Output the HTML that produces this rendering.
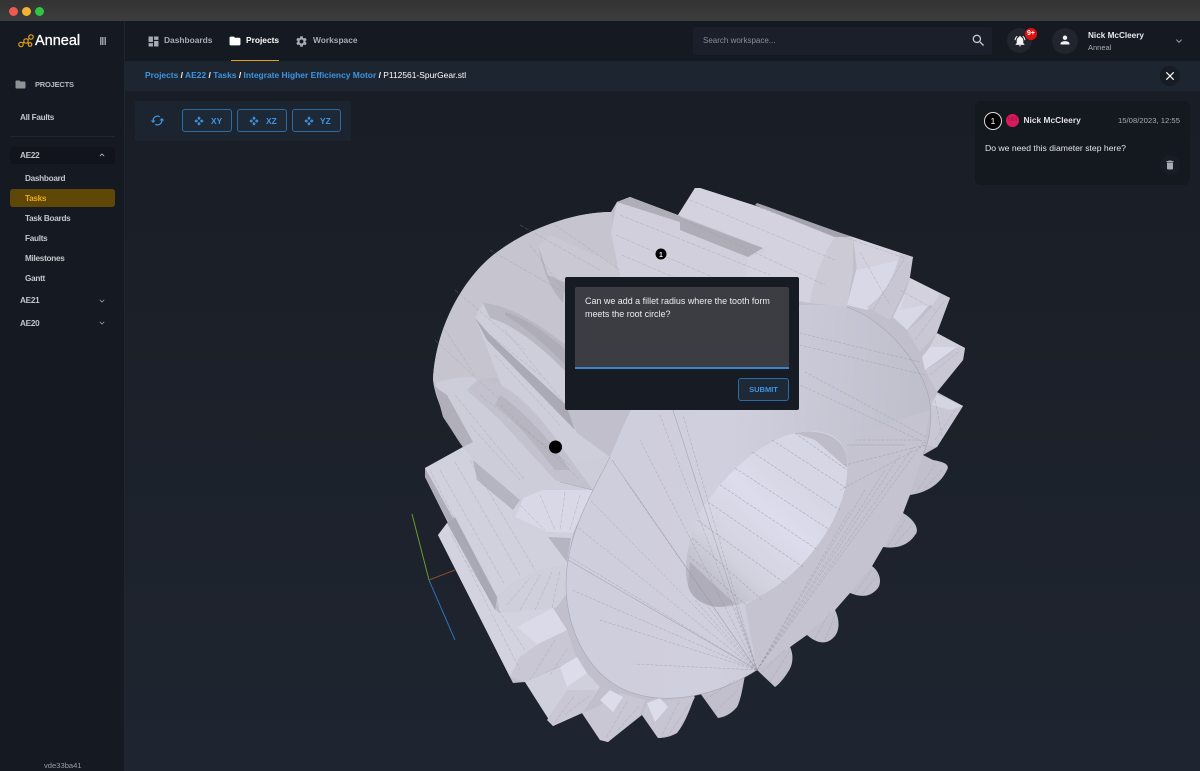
<!DOCTYPE html>
<html lang="en"><head><meta charset="utf-8"><title>Anneal</title>
<style>
*{box-sizing:border-box}
html,body{margin:0;padding:0;background:#1d222c}
body{width:1200px;height:771px;position:relative;overflow:hidden;font-family:"Liberation Sans",sans-serif;font-size:8.4px;color:#d8dadf}
.a{position:absolute;white-space:nowrap}
.b{font-weight:bold}
.s{font-size:8.200px;letter-spacing:-.28px;font-weight:bold;color:#c4c6ca;line-height:11px}
svg.i{position:absolute;fill:currentColor}
.blue{color:#3f94e0}
.btn{position:absolute;top:109px;height:23px;border:1px solid #2f6ba3;border-radius:3px;background:#1e2937}
</style></head><body>
<div class="a" style="left:0;top:0;width:1200px;height:21px;background:linear-gradient(#333333,#3d3d3d)"></div>
<div class="a" style="left:9px;top:7px;width:9px;height:9px;border-radius:50%;background:#ee5a52"></div>
<div class="a" style="left:22px;top:7px;width:9px;height:9px;border-radius:50%;background:#f4b42f"></div>
<div class="a" style="left:35px;top:7px;width:9px;height:9px;border-radius:50%;background:#30c544"></div>

<div class="a" style="left:0;top:21px;width:1200px;height:40px;background:#151922"></div>
<div class="a" style="left:0;top:61px;width:124px;height:710px;background:#151922"></div>
<div class="a" style="left:124px;top:21px;width:1px;height:750px;background:#1f2630"></div>
<div class="a" style="left:125px;top:61px;width:1075px;height:30px;background:#1d2530"></div>
<div class="a" style="left:125px;top:91px;width:1075px;height:680px;background:linear-gradient(#191d25,#1f2530)"></div>

<svg class="a" style="left:0;top:0" width="1200" height="771" viewBox="0 0 1200 771">
<defs>
<linearGradient id="f" gradientUnits="userSpaceOnUse" x1="600" y1="500" x2="920" y2="520"><stop offset="0" stop-color="#cfcedc"/><stop offset=".4" stop-color="#d0cfdd"/><stop offset="1" stop-color="#bfbecb"/></linearGradient>
<linearGradient id="bo" gradientUnits="userSpaceOnUse" x1="700" y1="590" x2="800" y2="480"><stop offset="0" stop-color="#b9b8c3"/><stop offset=".3" stop-color="#d2d2df"/><stop offset=".7" stop-color="#dcdcec"/><stop offset="1" stop-color="#d6d6e4"/></linearGradient>
</defs>
<!-- overall silhouette -->
<path d="M433 380C436 320 470 270 500 250C530 228 575 212 611 212L617 202L630 197L678 215L695 188L700 188L913 257L908 277L950 298L935 333L965 348L963 360L937 392L963 406L937 447L923 455L933 460C945 462 950 465 947 470C940 485 925 493 910 495L903 513C915 520 920 530 915 535C908 546 895 549 883 547L872 566C880 572 882 582 878 588C870 598 860 597 850 593L835 610C840 620 840 632 833 638C825 646 815 642 807 635L790 647C794 655 793 665 788 672C783 680 778 685 775 687L757 670L745 675C742 692 740 702 737 707C730 715 724 717 718 718L700 693L695 695C690 710 684 725 677 733C670 737 664 738 658 738L642 715L608 742L600 740L582 713L553 726L525 682L513 683L438 535L448 523L425 477L425 468L463 447C450 430 435 400 433 380Z" fill="#c0bfcb"/>

<!-- back circle area -->
<path d="M433 380C436 320 470 270 500 250C530 228 575 212 611 212L620 277L570 300L566 345L483 303L475 317L507 377L435 383Z" fill="#c5c4cf"/>
<!-- upper groove lobe -->
<path d="M539 245L550 235L613 263L620 277L566 285L563 303C550 290 540 265 539 245Z" fill="#c9c8d3"/>
<path d="M539 248C542 270 552 292 563 303L566 283L548 275Z" fill="#b4b3be"/>
<!-- ridge / groove 2 -->
<path d="M475 317L483 303L566 345L566 408L577 433L610 457L590 490L545 470L507 400Z" fill="#cecdda"/>
<path d="M483 303C510 305 540 325 566 345L566 372C545 350 515 325 490 318Z" fill="#b8b7c2"/>
<path d="M505 315C530 330 550 350 566 365L566 350C545 332 525 318 505 312Z" fill="#adacb7"/>
<path d="M475 318L487 340L575 430L566 405L490 335Z" fill="#aaa9b5"/>
<!-- groove 3 -->
<path d="M435 383C450 378 465 376 480 378L497 383L573 463L610 457L593 490L523 498L515 517L463 447Z" fill="#cdccd9"/>
<path d="M480 378C520 385 550 430 573 463L593 490L555 480L500 420L467 390Z" fill="#c2c1cd"/>
<path d="M500 395C525 412 550 440 570 470L555 470C535 445 515 420 495 405Z" fill="#b6b5c0"/>
<path d="M435 387L443 417L463 447L473 442L447 395Z" fill="#b0afba"/>
<!-- top teeth -->
<path d="M617 202L630 197L680 217L763 248L780 277L745 300L620 277L611 233Z" fill="#d0cfdb"/>
<path d="M680 217L763 248L748 257L680 230Z" fill="#adacb7"/>
<path d="M617 202L630 197L680 216L680 222Z" fill="#aeadb8"/>
<path d="M748 257L767 252L780 277L745 277Z" fill="#d3d2de"/>
<path d="M678 215L695 188L700 188L853 237L835 237L810 303L790 300L780 277L763 248Z" fill="#d3d2de"/>
<path d="M757 203L852 237L837 238L755 205Z" fill="#a5a4b0"/>
<!-- right teeth -->
<path d="M835 237L853 237L853 270L847 307L810 303C812 285 822 255 835 237Z" fill="#cbcad5"/>
<path d="M847 305L857 267L900 253L893 290L867 310Z" fill="#d8d8e6"/>
<path d="M853 237L913 257L900 260L857 270Z" fill="#d2d1dd"/>
<path d="M900 253L913 257L910 277L890 320L867 307C885 295 895 275 900 253Z" fill="#c7c6d2"/>
<path d="M893 317L910 283L947 298L940 293L907 330Z" fill="#d8d8e6"/>
<path d="M910 278L950 298L947 305L925 305L900 310Z" fill="#d2d1dd"/>
<path d="M940 293L950 298L937 333L920 352L907 330C920 322 935 305 940 293Z" fill="#c8c7d3"/>
<path d="M922 357L930 347L957 347L925 370Z" fill="#dadae8"/>
<path d="M937 333L965 348L957 347L930 347Z" fill="#d0cfdb"/>
<path d="M957 347L965 348L963 360L937 392L925 370C935 365 950 355 957 347Z" fill="#c8c7d3"/>
<path d="M930 403L937 394L963 406L937 447L927 445Z" fill="#c8c7d3"/>
<path d="M937 394L963 406L950 410L932 405Z" fill="#d5d4e1"/>
<!-- lower left teeth -->
<path d="M425 468L463 447L473 460L520 500L515 517L547 532L573 533L567 565L540 570L513 583L497 597Z" fill="#d1d0dd"/>
<path d="M473 460L520 500L513 510L477 480Z" fill="#b5b4c0"/>
<path d="M425 468L497 597L495 610L425 477Z" fill="#adacb8"/>
<path d="M447 523L455 517L497 597L495 610Z" fill="#a9a8b4"/>
<path d="M515 517L523 498L543 490L593 490L573 533L547 532Z" fill="#d8d8e6"/>
<path d="M548 537L571 538L567 562Z" fill="#b5b4c0"/>
<path d="M497 597L513 583L540 570L567 565L567 593L557 607L537 613L517 615L500 613Z" fill="#cfcedb"/>
<path d="M438 535L447 523L495 610L500 613L553 608L567 630L540 643L520 657L510 677L513 683Z" fill="#d3d2df"/>
<path d="M517 627L553 608L567 630L540 647Z" fill="#dadae8"/>
<path d="M510 677L525 682L557 667L577 660L567 630L540 643L520 657Z" fill="#c8c7d3"/>
<path d="M525 682L560 667L587 673L600 687L582 713L553 726Z" fill="#d0cfdc"/>
<path d="M560 667L577 657L587 673L567 687Z" fill="#dcdcea"/>
<path d="M547 720L553 726L582 713L597 690L567 690Z" fill="#c8c7d3"/>
<path d="M582 713L597 707L620 693L645 700L640 715L608 742L600 740Z" fill="#c8c7d3"/>
<path d="M600 700L610 690L623 697L613 712Z" fill="#dcdcea"/>
<path d="M642 715L647 703L695 697L677 733L658 738Z" fill="#c6c5d1"/>
<path d="M647 703L660 698L668 707L655 722Z" fill="#dcdcea"/>

<!-- front face -->
<path d="M610 457L593 490C578 520 566 550 566 585C566 625 585 672 625 690C660 705 710 700 757 670L790 647L835 610L872 566L903 513L923 455C930 440 932 420 930 403C925 370 890 322 847 307C800 300 720 310 680 340C650 365 625 420 610 457Z" fill="url(#f)"/>
<!-- band around bore -->
<path d="M847 450C850 500 810 570 745 605L757 670L790 647L835 610L872 566L903 513L923 455L930 410L865 430Z" fill="#c4c3cf"/>
<!-- bore -->
<path d="M686 567C688 540 695 515 712 495C735 465 765 440 795 433C825 427 845 437 847 460C850 490 835 525 810 555C785 585 750 607 720 607C698 607 684 590 686 567Z" fill="url(#bo)"/>
<path d="M688 585C690 598 705 607 720 607L735 604L690 562Z" fill="#aeadb9"/>
<path d="M795 433C822 428 845 437 847 460L847 468L815 440Z" fill="#bdbcc8"/>
<!-- bore lines -->
<g fill="none" stroke="#9897a4" stroke-width=".6" stroke-dasharray="3 1.500" opacity=".7">
<path d="M692 538L762 600M697 520L786 584M708 502L803 567M720 485L818 550M735 468L830 530M752 452L840 510M772 440L846 488M795 433L847 470M689 556L745 604"/>
</g>
<!-- face rays -->
<g fill="none" stroke="#8d8c99" stroke-width=".5" stroke-dasharray="3 1.500" opacity=".6">
<path d="M757 670L625 480M757 670L640 440M757 670L660 415M757 670L683 415M757 670L708 607M757 670L735 607M757 670L695 600M757 670L600 620M757 670L572 590M757 670L568 556M757 670L576 526M757 670L590 500M757 670L635 664M757 670L850 510M757 670L865 490M757 670L885 470M757 670L900 455M757 670L915 445M757 670L925 440"/>
<path d="M920 362L800 333M925 375L800 345M926 437L805 372M926 443L800 385M920 440L855 440M925 445L840 490M925 445L845 465"/>
</g>
<g fill="none" stroke="#9e9da9" stroke-width=".6" opacity=".8">
<path d="M593 490C578 520 566 550 566 585C566 625 585 672 625 690C660 705 710 700 757 670"/>
<path d="M847 307C890 322 925 370 930 403C932 420 930 440 923 455"/>
<path d="M610 457L593 490L560 482"/>
<path d="M757 670L612 460M757 670L568 560"/>
<path d="M660 370L757 670M847 445L905 445"/>
</g>
<!-- tooth lines -->
<g fill="none" stroke="#9897a4" stroke-width=".5" stroke-dasharray="4 1.500" opacity=".6">
<path d="M620 215L770 275M616 235L765 300M622 255L750 310M690 200L835 260M684 220L825 285M760 208L905 258M860 252L890 305M873 310L905 258M900 290L935 310M915 340L945 300M930 375L958 352M935 440L955 410M942 436L935 400"/>
<path d="M430 470L490 590M440 470L505 585M455 462L520 575M470 460L535 570M452 535L520 670M465 560L525 650M500 405L580 480M480 395L570 465M455 395L525 480M470 425L520 480M505 330L570 410M495 355L560 425M490 335L540 375M530 245L575 305M555 225L620 270M435 340L500 400M455 290L525 350M490 250L560 290M520 225L600 270M445 330L475 375"/>
<path d="M520 505L545 530M540 495L555 530M565 492L560 530M580 495L570 530M507 605L530 578M520 610L540 575M535 610L552 572M552 608L560 570M530 680L555 640M550 675L568 648M555 722L575 695M565 715L590 695M606 738L628 700M618 730L640 705M662 735L680 700M670 733L690 703M762 672L785 650M770 682L790 650M705 700L735 680M715 712L738 690M815 638L830 612M825 640L835 615M855 593L872 570M862 594L878 575M888 546L905 520M895 545L912 525M915 494L935 465M925 488L942 470"/>
</g>
<!-- axes -->
<line x1="412" y1="514" x2="429" y2="580" stroke="#6c9a2a" stroke-width="1"/>
<line x1="429" y1="580" x2="455" y2="570" stroke="#8a4a2a" stroke-width="1"/>
<line x1="429" y1="580" x2="455" y2="640" stroke="#2a72b8" stroke-width="1"/>
<!-- markers -->
<circle cx="555.500" cy="447" r="6.500" fill="#000"/>
<circle cx="661" cy="254" r="5.500" fill="#000"/>
<text x="661" y="257" font-size="7" font-weight="bold" fill="#eee" text-anchor="middle" font-family="Liberation Sans, sans-serif">1</text>
</svg>

<!-- logo -->
<svg class="a" style="left:18px;top:34px" width="16" height="14" viewBox="0 0 16 14" fill="none" stroke="#e0a21a" stroke-width="1.200"><circle cx="3" cy="10.500" r="2.200"/><circle cx="8" cy="7" r="2.200"/><circle cx="13" cy="3" r="2.200"/><circle cx="12" cy="10.500" r="1.800"/><path d="M4.500 9L6.500 8M9.700 5.700L11.300 4.300M9.500 8.300L10.700 9.500"/></svg>
<div class="a" style="left:35px;top:33px;font-size:14.500px;line-height:16px;color:#fff;-webkit-text-stroke:.3px #fff">Anneal</div>
<div class="a" style="left:100px;top:37px;width:6px;height:8px;background:repeating-linear-gradient(90deg,#9a9da3 0 1.500px,#151922 1.500px 2.200px)"></div>

<!-- nav -->
<svg class="i" style="left:148px;top:35.500px;color:#a8abb0" width="11" height="11" viewBox="2 2 20 20"><path d="M3 13h8V3H3v10zm0 8h8v-6H3v6zm10 0h8V11h-8v10zm0-18v6h8V3h-8z"/></svg>
<div class="a b" style="left:164px;top:35px;color:#a8abb0;line-height:11px">Dashboards</div>
<svg class="i" style="left:228.500px;top:34.500px;color:#fff" width="12" height="12" viewBox="1 1 22 22"><path d="M10 4H4c-1.100 0-1.990.9-1.990 2L2 18c0 1.100.9 2 2 2h16c1.100 0 2-.9 2-2V8c0-1.100-.9-2-2-2h-8l-2-2z"/></svg>
<div class="a b" style="left:246px;top:34.500px;color:#fff;line-height:11px">Projects</div>
<div class="a" style="left:231px;top:60px;width:48px;height:1px;background:#e0a21a"></div>
<svg class="i" style="left:296px;top:35.500px;color:#a8abb0" width="11" height="11" viewBox="2 2 20 20"><path d="M19.140 12.940c.04-.3.06-.61.06-.94 0-.32-.02-.64-.07-.94l2.030-1.580c.18-.14.23-.41.12-.61l-1.920-3.320c-.12-.22-.37-.29-.59-.22l-2.390.96c-.5-.38-1.030-.7-1.620-.94l-.36-2.540c-.04-.24-.24-.41-.48-.41h-3.840c-.24 0-.43.17-.47.41l-.36 2.540c-.59.24-1.130.57-1.620.94l-2.390-.96c-.22-.08-.47 0-.59.22L2.740 8.870c-.12.21-.08.47.12.61l2.030 1.580c-.05.3-.09.63-.09.94s.02.64.07.94l-2.030 1.580c-.18.14-.23.41-.12.61l1.920 3.320c.12.22.37.29.59.22l2.390-.96c.5.38 1.030.7 1.620.94l.36 2.540c.05.24.24.41.48.41h3.840c.24 0 .44-.17.47-.41l.36-2.540c.59-.24 1.130-.56 1.620-.94l2.390.96c.22.08.47 0 .59-.22l1.920-3.320c.12-.22.07-.47-.12-.61l-2.010-1.580zM12 15.600c-1.980 0-3.600-1.620-3.600-3.600s1.620-3.600 3.600-3.600 3.600 1.620 3.600 3.600-1.620 3.600-3.600 3.600z"/></svg>
<div class="a b" style="left:313px;top:35px;color:#a8abb0;line-height:11px">Workspace</div>

<!-- search -->
<div class="a" style="left:693px;top:27px;width:299px;height:28px;background:#1b1f29;border-radius:2px"></div>
<div class="a" style="left:703px;top:34.500px;color:#8a8d93;line-height:11px;font-size:8px">Search workspace...</div>
<svg class="i" style="left:972px;top:34px;color:#c4c6ca" width="13" height="13" viewBox="2 2 20 20"><path d="M15.500 14h-.79l-.28-.27C15.410 12.590 16 11.110 16 9.500 16 5.910 13.090 3 9.500 3S3 5.910 3 9.500 5.910 16 9.500 16c1.610 0 3.090-.59 4.230-1.570l.27.28v.79l5 4.990L20.490 19l-4.990-5zm-6 0C7.010 14 5 11.990 5 9.500S7.010 5 9.500 5 14 7.010 14 9.500 11.990 14 9.500 14z"/></svg>

<!-- bell -->
<div class="a" style="left:1007px;top:28px;width:25px;height:25px;border-radius:50%;background:#20252e"></div>
<svg class="i" style="left:1014px;top:35px;color:#f2f2f2" width="12" height="12" viewBox="1 1 22 22"><path d="M7.580 4.080L6.150 2.650C3.750 4.480 2.170 7.300 2.030 10.500h2c.15-2.650 1.510-4.970 3.550-6.420zm12.390 6.420h2c-.15-3.200-1.730-6.020-4.120-7.850l-1.420 1.430c2.020 1.450 3.390 3.770 3.540 6.420zM18 11c0-3.070-1.640-5.640-4.500-6.320V4c0-.83-.67-1.500-1.500-1.500s-1.500.67-1.500 1.500v.68C7.630 5.360 6 7.920 6 11v5l-2 2v1h16v-1l-2-2v-5zm-6 11c.14 0 .27-.01.4-.04.65-.14 1.180-.58 1.440-1.180.1-.24.15-.5.15-.78h-4c.01 1.100.9 2 2.010 2z"/></svg>
<div class="a" style="left:1025px;top:28px;width:12px;height:12px;border-radius:50%;background:#e01010;color:#fff;font-size:7px;line-height:12px;text-align:center;font-weight:bold">9+</div>

<!-- user -->
<div class="a" style="left:1052px;top:28px;width:26px;height:26px;border-radius:50%;background:#20252e"></div>
<svg class="i" style="left:1060px;top:35px;color:#f2f2f2" width="10" height="10" viewBox="3 3 18 18"><path d="M12 12c2.210 0 4-1.790 4-4s-1.790-4-4-4-4 1.790-4 4 1.790 4 4 4zm0 2c-2.670 0-8 1.340-8 4v2h16v-2c0-2.660-5.330-4-8-4z"/></svg>
<div class="a b" style="left:1088px;top:30px;color:#e6e7ea;line-height:12px;font-size:8.200px">Nick McCleery</div>
<div class="a" style="left:1088px;top:42px;color:#a8abb0;font-size:7.500px;line-height:11px">Anneal</div>
<svg class="i" style="left:1173px;top:35px;color:#9a9da3" width="12" height="12" viewBox="0 0 24 24"><path d="M16.590 8.590L12 13.170 7.410 8.590 6 10l6 6 6-6z"/></svg>

<!-- breadcrumb -->
<div class="a b" style="left:145px;top:70px;line-height:11px;color:#fff;font-size:8.450px"><span class="blue">Projects</span> / <span class="blue">AE22</span> / <span class="blue">Tasks</span> / <span class="blue">Integrate Higher Efficiency Motor</span> / <span style="font-weight:normal">P112561-SpurGear.stl</span></div>
<div class="a" style="left:1160px;top:66px;width:20px;height:20px;border-radius:50%;background:#171b23"></div>
<svg class="i" style="left:1163px;top:69px;color:#fff" width="14" height="14" viewBox="0 0 24 24"><path d="M19 6.410L17.590 5 12 10.590 6.410 5 5 6.410 10.590 12 5 17.590 6.410 19 12 13.410 17.590 19 19 17.590 13.410 12z"/></svg>

<!-- sidebar -->
<svg class="i" style="left:15px;top:79px;color:#8f9297" width="11" height="11" viewBox="1 1 22 22"><path d="M10 4H4c-1.100 0-1.990.9-1.990 2L2 18c0 1.100.9 2 2 2h16c1.100 0 2-.9 2-2V8c0-1.100-.9-2-2-2h-8l-2-2z"/></svg>
<div class="a b" style="left:35px;top:79px;color:#b8bbc0;font-size:7.500px;letter-spacing:-.2px;line-height:11px">PROJECTS</div>
<div class="a s" style="left:20px;top:111.500px">All Faults</div>
<div class="a" style="left:10px;top:136px;width:105px;height:1px;background:#1f2630"></div>
<div class="a" style="left:10px;top:147px;width:105px;height:17px;background:#11141b;border-radius:3px"></div>
<div class="a s" style="left:20px;top:150px">AE22</div>
<svg class="i" style="left:97px;top:150px;color:#c4c6ca" width="10" height="10" viewBox="0 0 24 24"><path d="M12 8l-6 6 1.410 1.410L12 10.830l4.590 4.580L18 14z"/></svg>
<div class="a s" style="left:25px;top:172.500px">Dashboard</div>
<div class="a" style="left:10px;top:189px;width:104.500px;height:18px;background:#5f4708;border-radius:3px"></div>
<div class="a s" style="left:25px;top:192.500px;color:#e8ac1c">Tasks</div>
<div class="a s" style="left:25px;top:212.500px">Task Boards</div>
<div class="a s" style="left:25px;top:232.500px">Faults</div>
<div class="a s" style="left:25px;top:252.500px">Milestones</div>
<div class="a s" style="left:25px;top:272.500px">Gantt</div>
<div class="a s" style="left:20px;top:295px">AE21</div>
<svg class="i" style="left:97px;top:295.500px;color:#9a9da3" width="10" height="10" viewBox="0 0 24 24"><path d="M16.590 8.590L12 13.170 7.410 8.590 6 10l6 6 6-6z"/></svg>
<div class="a s" style="left:20px;top:317.500px">AE20</div>
<svg class="i" style="left:97px;top:318px;color:#9a9da3" width="10" height="10" viewBox="0 0 24 24"><path d="M16.590 8.590L12 13.170 7.410 8.590 6 10l6 6 6-6z"/></svg>
<div class="a" style="left:44px;top:761px;color:#9a9da3;font-size:7.600px;line-height:10px">vde33ba41</div>

<!-- toolbar -->
<div class="a" style="left:135px;top:101px;width:216px;height:40px;background:#1c2430;border-radius:2px"></div>
<svg class="i" style="left:150px;top:113px;color:#3f94e0" width="15" height="15" viewBox="0 0 24 24"><g transform="rotate(90 12 12)"><path d="M12 4V1L8 5l4 4V6c3.310 0 6 2.690 6 6 0 1.010-.25 1.970-.7 2.800l1.460 1.460C19.540 15.030 20 13.570 20 12c0-4.420-3.580-8-8-8zm0 14c-3.310 0-6-2.690-6-6 0-1.010.25-1.970.7-2.800L5.240 7.740C4.460 8.970 4 10.430 4 12c0 4.420 3.580 8 8 8v3l4-4-4-4v3z"/></g></svg>
<div class="btn" style="left:182px;width:50px"></div>
<div class="btn" style="left:237px;width:50px"></div>
<div class="btn" style="left:292px;width:49px"></div>
<svg class="i" style="left:194px;top:116px;color:#3f94e0" width="10" height="10" viewBox="0 0 24 24"><path d="M10 9h4V6h3l-5-5-5 5h3v3zm-1 1H6V7l-5 5 5 5v-3h3v-4zm14 2l-5-5v3h-3v4h3v3l5-5zm-9 3h-4v3H7l5 5 5-5h-3v-3z"/></svg>
<svg class="i" style="left:249px;top:116px;color:#3f94e0" width="10" height="10" viewBox="0 0 24 24"><path d="M10 9h4V6h3l-5-5-5 5h3v3zm-1 1H6V7l-5 5 5 5v-3h3v-4zm14 2l-5-5v3h-3v4h3v3l5-5zm-9 3h-4v3H7l5 5 5-5h-3v-3z"/></svg>
<svg class="i" style="left:304px;top:116px;color:#3f94e0" width="10" height="10" viewBox="0 0 24 24"><path d="M10 9h4V6h3l-5-5-5 5h3v3zm-1 1H6V7l-5 5 5 5v-3h3v-4zm14 2l-5-5v3h-3v4h3v3l5-5zm-9 3h-4v3H7l5 5 5-5h-3v-3z"/></svg>
<div class="a b blue" style="left:211px;top:115.500px;line-height:11px">XY</div>
<div class="a b blue" style="left:266px;top:115.500px;line-height:11px">XZ</div>
<div class="a b blue" style="left:320px;top:115.500px;line-height:11px">YZ</div>

<!-- comment card -->
<div class="a" style="left:975px;top:101px;width:215px;height:84px;background:#14181f;border-radius:6px"></div>
<div class="a" style="left:984px;top:112px;width:18px;height:18px;border-radius:50%;background:#000;border:1px solid #ddd;color:#fff;text-align:center;line-height:16px;font-size:8.500px">1</div>
<div class="a" style="left:1006px;top:114px;width:13px;height:13px;border-radius:50%;background:#d81b5c;color:#9c1240;text-align:center;line-height:13px;font-size:6px">NM</div>
<div class="a b" style="left:1023.500px;top:114.500px;color:#dfe0e3;line-height:11px">Nick McCleery</div>
<div class="a" style="left:1118px;top:115px;color:#a8abb0;font-size:7.700px;line-height:11px">15/08/2023, 12:55</div>
<div class="a" style="left:985px;top:143px;color:#e4e5e8;line-height:11px;font-size:8.650px">Do we need this diameter step here?</div>
<div class="a" style="left:1160px;top:155px;width:20px;height:20px;border-radius:50%;background:#181c24"></div>
<svg class="i" style="left:1164px;top:159px;color:#a8abb0" width="12" height="12" viewBox="0 0 24 24"><path d="M6 19c0 1.100.9 2 2 2h8c1.100 0 2-.9 2-2V7H6v12zM19 4h-3.500l-1-1h-5l-1 1H5v2h14V4z"/></svg>

<!-- dialog -->
<div class="a" style="left:565px;top:277px;width:234px;height:133px;background:#171b23;border-radius:2px"></div>
<div class="a" style="left:575px;top:287px;width:214px;height:82px;background:#3b3d43;border-bottom:2px solid #3b84c8;border-radius:2px 2px 0 0"></div>
<div class="a" style="left:585px;top:295px;width:195px;color:#eceded;font-size:8.950px;line-height:13px;white-space:normal">Can we add a fillet radius where the tooth form meets the root circle?</div>
<div class="a b blue" style="left:738px;top:378px;width:51px;height:23px;border:1px solid #2f6ba3;border-radius:3px;background:#1e2937;text-align:center;line-height:21px;font-size:7.500px">SUBMIT</div>
</body></html>
